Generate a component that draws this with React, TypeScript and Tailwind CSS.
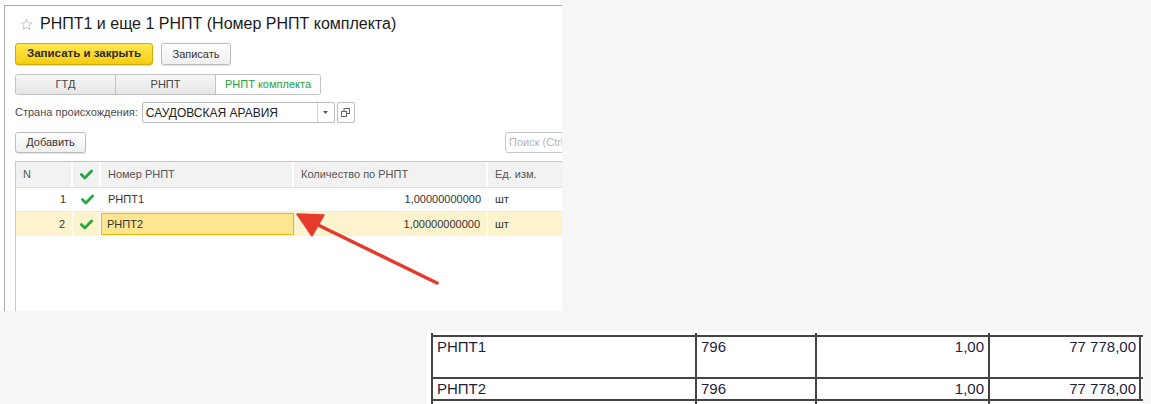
import React from "react";

const font = { fontFamily: '"Liberation Sans", Arial, sans-serif' };

function Check() {
  return (
    <svg width="13" height="11" viewBox="0 0 13 11">
      <path d="M1.4 5.6 L4.8 9 L11.6 2" fill="none" stroke="#27a844" strokeWidth="2.8" strokeLinecap="round" strokeLinejoin="round" />
    </svg>
  );
}

export default function App() {
  return (
    <div className="relative w-[1151px] h-[404px] bg-[#f6f6f6] overflow-hidden text-[#333]" style={font}>
      {/* 1C form */}
      <div className="w-[562px] h-[311px] bg-white pt-[5px] pl-[4px] overflow-hidden">
        <div className="h-full border-t border-l border-[#a9a9a9] pl-[10px] pt-[5px] overflow-hidden">
          {/* title */}
          <div className="h-[26px] flex items-center">
            <svg className="ml-[5px]" width="13" height="13" viewBox="0 0 24 24">
              <path d="M12 2.5 L14.9 8.9 L21.8 9.6 L16.6 14.2 L18.1 21 L12 17.5 L5.9 21 L7.4 14.2 L2.2 9.6 L9.1 8.9 Z" fill="none" stroke="#bdbdbd" strokeWidth="1.6" strokeLinejoin="round" />
            </svg>
            <span className="ml-[7px] text-[16px] text-[#1a1a1a] whitespace-nowrap">РНПТ1 и еще 1 РНПТ (Номер РНПТ комплекта)</span>
          </div>
          {/* buttons */}
          <div className="mt-[6px] flex items-center gap-[8px]">
            <div className="w-[138px] h-[22px] shrink-0 flex items-center justify-center rounded-[3px] border border-[#d2aa00] bg-gradient-to-b from-[#ffe84e] to-[#f5cc00] text-[11.5px] font-bold text-[#2a2a2a] shadow-[0_1px_1px_rgba(0,0,0,0.15)]">
              Записать и закрыть
            </div>
            <div className="w-[70px] h-[22px] shrink-0 flex items-center justify-center rounded-[3px] border border-[#bdbdbd] bg-gradient-to-b from-white to-[#efefef] text-[11px] text-[#333] shadow-[0_1px_1px_rgba(0,0,0,0.12)]">
              Записать
            </div>
          </div>
          {/* tabs */}
          <div className="mt-[9px] flex w-[306px] h-[21px] rounded-[3px] border border-[#c2c2c2] overflow-hidden text-[11px]">
            <div className="w-[100px] flex items-center justify-center bg-gradient-to-b from-[#f7f7f7] to-[#e6e6e6] border-r border-[#c2c2c2] text-[#444]">ГТД</div>
            <div className="w-[100px] flex items-center justify-center bg-gradient-to-b from-[#f7f7f7] to-[#e6e6e6] border-r border-[#c2c2c2] text-[#444]">РНПТ</div>
            <div className="flex-1 flex items-center justify-center bg-white text-[#20a040]">РНПТ комплекта</div>
          </div>
          {/* country */}
          <div className="mt-[7px] flex items-center h-[21px] text-[11px]">
            <span className="text-[#4a4a4a] whitespace-nowrap">Страна происхождения:</span>
            <div className="ml-[4px] w-[193px] h-[21px] shrink-0 flex border border-[#bcbcbc] rounded-[2px] bg-white">
              <div className="flex-1 flex items-center pl-[3px] text-[#222] text-[12px]">САУДОВСКАЯ АРАВИЯ</div>
              <div className="w-[17px] border-l border-[#d0d0d0] flex items-center justify-center">
                <svg width="5" height="3" viewBox="0 0 5 3"><path d="M0 0 H5 L2.5 3 Z" fill="#555" /></svg>
              </div>
            </div>
            <div className="ml-[2px] w-[18px] h-[21px] shrink-0 border border-[#bcbcbc] rounded-[2px] bg-white flex items-center justify-center">
              <svg width="9" height="9" viewBox="0 0 9 9">
                <rect x="3" y="0.5" width="5.5" height="5" fill="none" stroke="#666" strokeWidth="1" />
                <rect x="0.5" y="3.5" width="5" height="5" fill="white" stroke="#666" strokeWidth="1" />
              </svg>
            </div>
          </div>
          {/* add + search */}
          <div className="mt-[9px] flex items-center h-[21px] text-[11px] w-[640px]">
            <div className="w-[71px] h-[21px] shrink-0 flex items-center justify-center rounded-[3px] border border-[#bdbdbd] bg-gradient-to-b from-white to-[#efefef] text-[#333] shadow-[0_1px_1px_rgba(0,0,0,0.12)]">
              Добавить
            </div>
            <div className="ml-[419px] w-[90px] h-[21px] shrink-0 rounded-[3px] border border-[#c8c8c8] bg-white flex items-center pl-[3px] text-[#b5b5b5] whitespace-nowrap overflow-hidden">
              Поиск (Ctrl+F)
            </div>
          </div>
          {/* table */}
          <div className="mt-[8px] w-[600px] h-[200px] border-t border-l border-[#c9c9c9] text-[11px]">
            <div className="flex h-[26px] bg-[#f2f2f2] border-b border-[#e0e0e0] text-[#555]">
              <div className="w-[57px] pl-[7px] flex items-center border-r-2 border-white">N</div>
              <div className="w-[28px] flex items-center justify-center border-r-2 border-white"><Check /></div>
              <div className="w-[193px] pl-[7px] flex items-center border-r-2 border-white">Номер РНПТ</div>
              <div className="w-[194px] pl-[7px] flex items-center border-r-2 border-white">Количество по РНПТ</div>
              <div className="flex-1 pl-[7px] flex items-center">Ед. изм.</div>
            </div>
            <div className="flex h-[24px] border-b border-[#ececec] text-[#333]">
              <div className="w-[57px] pr-[7px] flex items-center justify-end">1</div>
              <div className="w-[28px] flex items-center justify-center"><Check /></div>
              <div className="w-[193px] pl-[7px] flex items-center">РНПТ1</div>
              <div className="w-[194px] pr-[7px] flex items-center justify-end">1,00000000000</div>
              <div className="flex-1 pl-[7px] flex items-center">шт</div>
            </div>
            <div className="flex h-[24px] bg-[#fdf3cd] text-[#333]">
              <div className="w-[57px] pr-[7px] flex items-center justify-end border-r border-white">2</div>
              <div className="w-[28px] flex items-center justify-center border-r border-white"><Check /></div>
              <div className="w-[193px] flex items-center">
                <div className="w-full h-[22px] bg-[#fde68f] border border-[#f0b800] pl-[5px] flex items-center">РНПТ2</div>
              </div>
              <div className="w-[194px] pr-[7px] flex items-center justify-end border-r border-white">1,00000000000</div>
              <div className="flex-1 pl-[7px] flex items-center">шт</div>
            </div>
          </div>
        </div>
      </div>

      {/* red annotation arrow */}
      <svg className="absolute left-0 top-0" width="1151" height="404" viewBox="0 0 1151 404">
        <line x1="437" y1="283" x2="314" y2="223" stroke="#e53b2f" strokeWidth="3.5" strokeLinecap="round" />
        <path d="M297 214 L324 215 L312 236 Z" fill="#e53b2f" stroke="#e53b2f" strokeWidth="1.5" strokeLinejoin="round" />
      </svg>

      {/* printed form fragment */}
      <div className="ml-[427px] mt-[20px] w-[716px] bg-white pl-[4px] pt-[2px] text-[15px] text-[#1e1e3c]">
        <div className="flex h-[2px]">
          <div className="w-[264px] border-l-2 border-[#444]" />
          <div className="w-[120px] border-l-2 border-[#444]" />
          <div className="w-[173px] border-l-2 border-[#444]" />
          <div className="w-[153px] border-l-2 border-[#444]" />
        </div>
        <div className="border-t-2 border-[#444] w-[712px]">
          <div className="flex h-[42px] border-b-2 border-[#444]">
            <div className="w-[264px] border-l-2 border-[#444] pl-[4px] leading-[20px]">РНПТ1</div>
            <div className="w-[120px] border-l-2 border-[#444] pl-[4px] leading-[20px]">796</div>
            <div className="w-[173px] border-l-2 border-[#444] pr-[4px] text-right leading-[20px]">1,00</div>
            <div className="w-[153px] border-l-2 border-r-2 border-[#444] pr-[3px] text-right leading-[20px]">77 778,00</div>
          </div>
          <div className="flex h-[22px] border-b-2 border-[#444]">
            <div className="w-[264px] border-l-2 border-[#444] pl-[4px] leading-[20px]">РНПТ2</div>
            <div className="w-[120px] border-l-2 border-[#444] pl-[4px] leading-[20px]">796</div>
            <div className="w-[173px] border-l-2 border-[#444] pr-[4px] text-right leading-[20px]">1,00</div>
            <div className="w-[153px] border-l-2 border-r-2 border-[#444] pr-[3px] text-right leading-[20px]">77 778,00</div>
          </div>
          <div className="flex h-[10px]">
            <div className="w-[264px] border-l-2 border-[#444]" />
            <div className="w-[120px] border-l-2 border-[#444]" />
            <div className="w-[173px] border-l-2 border-[#444]" />
            <div className="w-[153px] border-l-2 border-[#444]" />
          </div>
        </div>
      </div>
    </div>
  );
}
